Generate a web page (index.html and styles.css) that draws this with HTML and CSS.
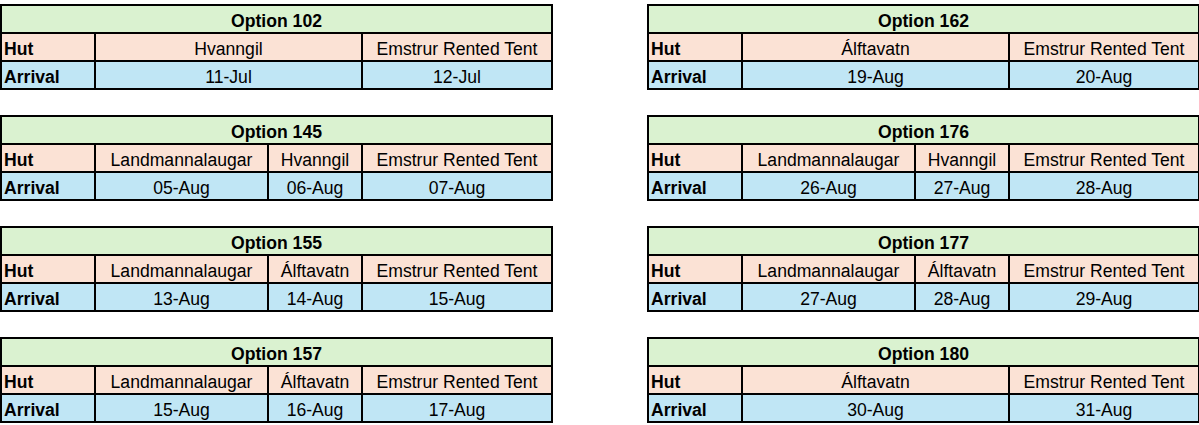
FILE: index.html
```html
<!DOCTYPE html>
<html lang="en">
<head>
<meta charset="utf-8">
<title>Hut options</title>
<link rel="stylesheet" href="styles.css">
</head>
<body>
<div class="sheet">
  <div class="opt">
    <div class="title">Option 102</div>
    <div class="lbl hut">Hut</div><div class="val hut span2">Hvanngil</div><div class="val hut">Emstrur Rented Tent</div>
    <div class="lbl arr">Arrival</div><div class="val arr span2">11-Jul</div><div class="val arr">12-Jul</div>
  </div>
  <div class="opt">
    <div class="title">Option 162</div>
    <div class="lbl hut">Hut</div><div class="val hut span2">Álftavatn</div><div class="val hut">Emstrur Rented Tent</div>
    <div class="lbl arr">Arrival</div><div class="val arr span2">19-Aug</div><div class="val arr">20-Aug</div>
  </div>
  <div class="opt">
    <div class="title">Option 145</div>
    <div class="lbl hut">Hut</div><div class="val hut">Landmannalaugar</div><div class="val hut">Hvanngil</div><div class="val hut">Emstrur Rented Tent</div>
    <div class="lbl arr">Arrival</div><div class="val arr">05-Aug</div><div class="val arr">06-Aug</div><div class="val arr">07-Aug</div>
  </div>
  <div class="opt">
    <div class="title">Option 176</div>
    <div class="lbl hut">Hut</div><div class="val hut">Landmannalaugar</div><div class="val hut">Hvanngil</div><div class="val hut">Emstrur Rented Tent</div>
    <div class="lbl arr">Arrival</div><div class="val arr">26-Aug</div><div class="val arr">27-Aug</div><div class="val arr">28-Aug</div>
  </div>
  <div class="opt">
    <div class="title">Option 155</div>
    <div class="lbl hut">Hut</div><div class="val hut">Landmannalaugar</div><div class="val hut">Álftavatn</div><div class="val hut">Emstrur Rented Tent</div>
    <div class="lbl arr">Arrival</div><div class="val arr">13-Aug</div><div class="val arr">14-Aug</div><div class="val arr">15-Aug</div>
  </div>
  <div class="opt">
    <div class="title">Option 177</div>
    <div class="lbl hut">Hut</div><div class="val hut">Landmannalaugar</div><div class="val hut">Álftavatn</div><div class="val hut">Emstrur Rented Tent</div>
    <div class="lbl arr">Arrival</div><div class="val arr">27-Aug</div><div class="val arr">28-Aug</div><div class="val arr">29-Aug</div>
  </div>
  <div class="opt">
    <div class="title">Option 157</div>
    <div class="lbl hut">Hut</div><div class="val hut">Landmannalaugar</div><div class="val hut">Álftavatn</div><div class="val hut">Emstrur Rented Tent</div>
    <div class="lbl arr">Arrival</div><div class="val arr">15-Aug</div><div class="val arr">16-Aug</div><div class="val arr">17-Aug</div>
  </div>
  <div class="opt">
    <div class="title">Option 180</div>
    <div class="lbl hut">Hut</div><div class="val hut span2">Álftavatn</div><div class="val hut">Emstrur Rented Tent</div>
    <div class="lbl arr">Arrival</div><div class="val arr span2">30-Aug</div><div class="val arr">31-Aug</div>
  </div>
</div>
</body>
</html>
```

FILE: styles.css
```css
html, body {
  margin: 0;
  padding: 0;
  background: #ffffff;
}

body {
  font-family: "Liberation Sans", Arial, sans-serif;
  font-size: 17.6px;
  color: #000000;
}

.sheet {
  display: grid;
  grid-template-columns: 553px 553px;
  column-gap: 94px;
  row-gap: 25px;
  padding-top: 4px;
}

.opt {
  display: grid;
  grid-template-columns: 92px 171px 92px 188px;
  grid-template-rows: 26px 26px 26px;
  gap: 2px;
  padding: 2px;
  background: #000000;
}

.opt > div {
  display: flex;
  align-items: flex-end;
  line-height: 20px;
  padding: 0 2px 1px;
  white-space: nowrap;
  overflow: hidden;
}

.title {
  grid-column: 1 / -1;
  justify-content: center;
  font-weight: bold;
  background: #daf2d0;
}

.lbl {
  font-weight: bold;
  justify-content: flex-start;
}

.val {
  justify-content: center;
}

.span2 {
  grid-column: span 2;
}

.hut {
  background: #fbe2d5;
}

.arr {
  background: #c0e6f5;
}
```
